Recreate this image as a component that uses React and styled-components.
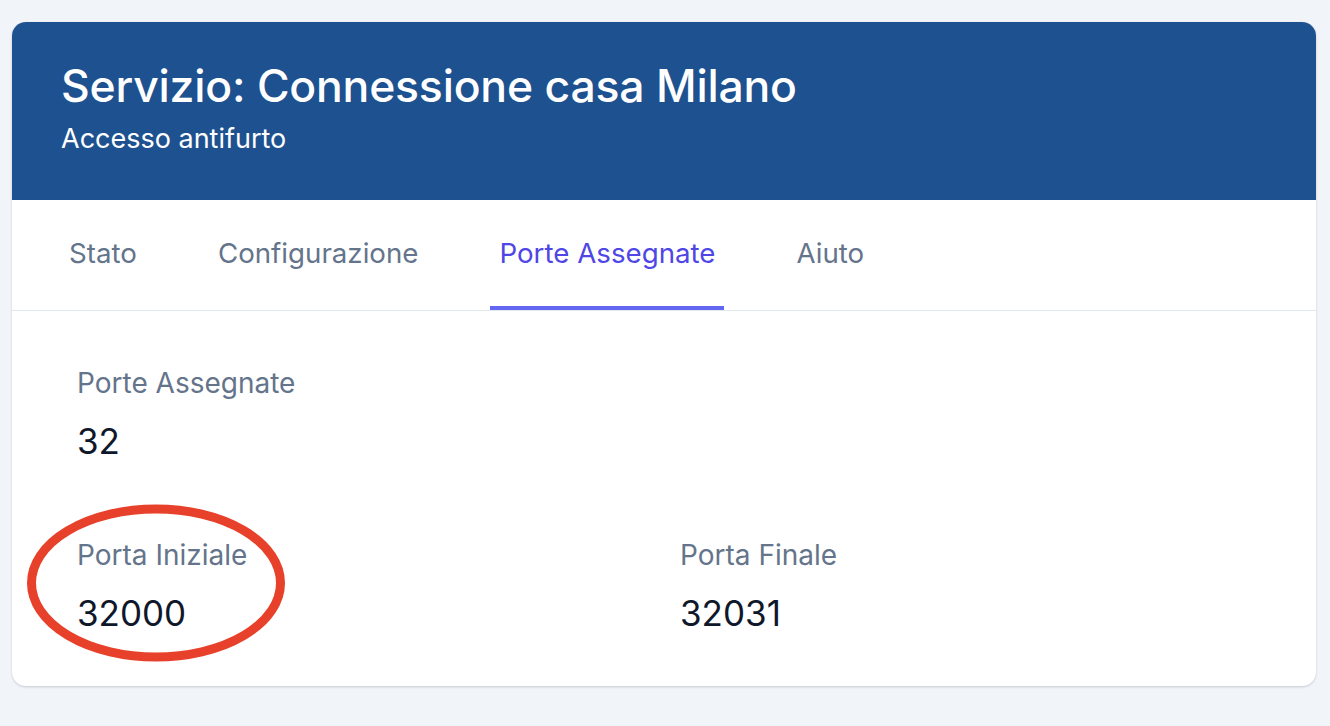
import React from 'react';
import styled, { createGlobalStyle } from 'styled-components';

const GlobalStyle = createGlobalStyle`
  body {
    margin: 0;
    background: #f1f4f9;
    font-family: Inter, "Noto Sans", sans-serif;
  }
`;

const Page = styled.div`
  padding: 22px 14px 40px 12px;
`;

const Card = styled.div`
  background: #fff;
  border-radius: 14px;
  overflow: hidden;
  box-shadow: 0 1px 3px rgba(15, 23, 42, 0.12), 0 1px 2px rgba(15, 23, 42, 0.06);
`;

const Header = styled.div`
  background: #1e518f;
  color: #fff;
  height: 178px;
  box-sizing: border-box;
  padding: 38px 49px 0;
  h1 {
    margin: 0;
    font-size: 44.5px;
    line-height: 52px;
    font-weight: 500;
    letter-spacing: -0.2px;
  }
  p {
    margin: 10px 0 0;
    font-size: 27px;
    line-height: 34px;
    font-weight: 400;
  }
`;

const Tabs = styled.nav`
  display: flex;
  gap: 63px;
  padding: 0 48px;
  height: 111px;
  box-sizing: border-box;
  border-bottom: 1px solid #e3e7ee;
`;

const Tab = styled.div`
  display: flex;
  align-items: center;
  padding: 0 9px;
  font-size: 27.7px;
  font-weight: 400;
  color: ${(p) => (p.$active ? '#4f46e5' : '#64748b')};
  border-bottom: 4px solid ${(p) => (p.$active ? '#6366f1' : 'transparent')};
`;

const Body = styled.div`
  display: grid;
  grid-template-columns: 1fr 1fr;
  column-gap: 32px;
  row-gap: 76px;
  padding: 56px 65px 51px;
`;

const Field = styled.div`
  position: relative;
  grid-column: ${(p) => (p.$full ? '1 / -1' : 'auto')};
`;

const Label = styled.div`
  font-size: 28px;
  line-height: 32px;
  color: #64748b;
`;

const Value = styled.div`
  margin-top: 20px;
  font-size: 35px;
  line-height: 44px;
  color: #0f172a;
`;

const Circle = styled.svg`
  position: absolute;
  left: -52px;
  top: -37px;
  width: 262px;
  height: 162px;
  pointer-events: none;
`;

const tabs = ['Stato', 'Configurazione', 'Porte Assegnate', 'Aiuto'];

export default function App() {
  return (
    <Page>
      <GlobalStyle />
      <Card>
        <Header>
          <h1>Servizio: Connessione casa Milano</h1>
          <p>Accesso antifurto</p>
        </Header>
        <Tabs>
          {tabs.map((t) => (
            <Tab key={t} $active={t === 'Porte Assegnate'}>{t}</Tab>
          ))}
        </Tabs>
        <Body>
          <Field $full>
            <Label>Porte Assegnate</Label>
            <Value>32</Value>
          </Field>
          <Field>
            <Label>Porta Iniziale</Label>
            <Value>32000</Value>
            <Circle viewBox="0 0 262 162">
              <ellipse cx="131" cy="81" rx="124.5" ry="74" fill="none" stroke="#e8412b" strokeWidth="9" />
            </Circle>
          </Field>
          <Field>
            <Label>Porta Finale</Label>
            <Value>32031</Value>
          </Field>
        </Body>
      </Card>
    </Page>
  );
}
